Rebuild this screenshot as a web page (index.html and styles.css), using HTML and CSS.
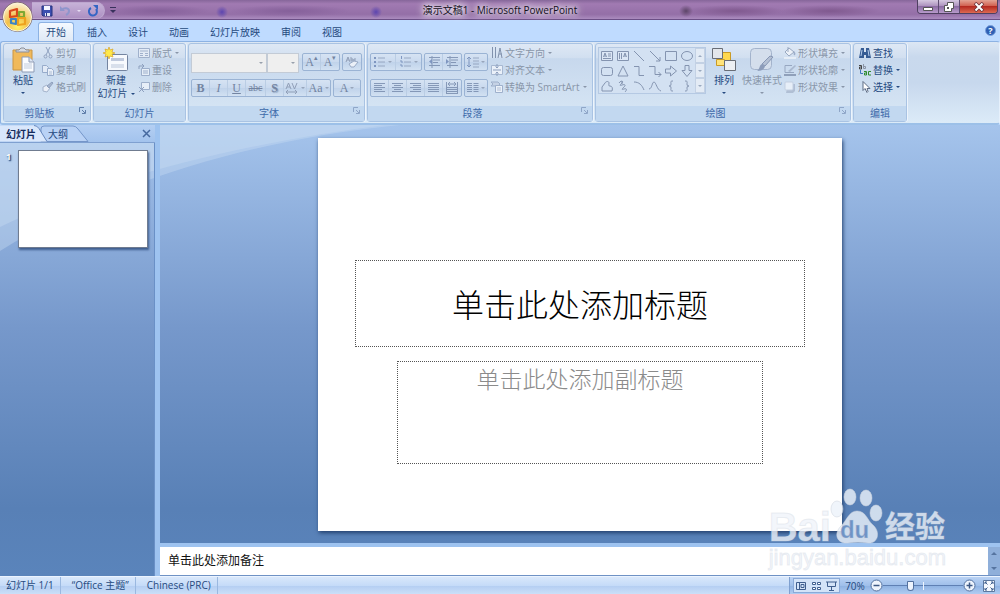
FILE: index.html
```html
<!DOCTYPE html>
<html lang="zh-CN">
<head>
  <meta charset="UTF-8">
  <meta name="viewport" content="width=device-width, initial-scale=1.0">
  <title>演示文稿1 - Microsoft PowerPoint</title>
  <link rel="stylesheet" href="styles.css">
</head>
<body>
  <header class="titlebar">
    <button class="office-button" aria-label="Office">
      <svg width="36" height="36" viewBox="0 0 36 36">
        <defs>
          <radialGradient id="orb" cx="50%" cy="85%" r="85%">
            <stop offset="0" stop-color="#fff36a"/>
            <stop offset="0.45" stop-color="#f3c04c"/>
            <stop offset="1" stop-color="#fdf3d6"/>
          </radialGradient>
        </defs>
        <circle cx="17.500" cy="17" r="15" fill="#7d6a6a"/>
        <circle cx="17.500" cy="17" r="14" fill="url(#orb)" stroke="#fdf6dc"/>
        <g fill="none" stroke-width="2.200" stroke-linejoin="round">
          <path stroke="#d9481c" d="M10 11l7-2v7l-7 1z"/>
          <path stroke="#7fa832" d="M19 12h5v5h-5z"/>
          <path stroke="#3b83c4" d="M11 19l5 0v5l-5-1z"/>
          <path stroke="#eda11d" d="M18 18l7 0v6l-7 1z"/>
        </g>
      </svg>
    </button>
    <div class="quick-access">
      <button aria-label="保存">
        <svg width="12" height="12" viewBox="0 0 12 12"><path d="M1 1h10v10H2l-1-1z" fill="#3c4fb0" stroke="#26327c"/><path d="M3 1h6v4H3z" fill="#f4f6ff"/><path d="M4 8h5v3H4z" fill="#dfe4f6"/><path d="M5 8h1v3H5z" fill="#26327c"/></svg>
      </button>
      <button aria-label="撤消">
        <svg width="12" height="12" viewBox="0 0 12 12"><path d="M1 1v5h5z" fill="#8f95cc"/><path d="M3 5c2-3 7-2 7 1 0 2-1 3-3 4" fill="none" stroke="#8f95cc" stroke-width="2"/></svg>
      </button>
      <span class="caret pale"></span>
      <button aria-label="重复">
        <svg width="12" height="12" viewBox="0 0 12 12"><path d="M4 3a4 4 0 1 0 5 1" fill="none" stroke="#3465c4" stroke-width="2"/><path d="M6 0h5v5z" fill="#3465c4"/></svg>
      </button>
    </div>
    <button class="customize" aria-label="自定义快速访问工具栏">
      <svg width="8" height="8" viewBox="0 0 8 8"><path d="M1 1h6v1H1z" fill="#39315c"/><path d="M1 4h6L4 7z" fill="#39315c"/></svg>
    </button>
    <h1 class="title">演示文稿1 - Microsoft PowerPoint</h1>
    <div class="window-controls">
      <button class="minimize" aria-label="最小化"><svg width="12" height="10" viewBox="0 0 12 10"><path d="M1.500 5.500h9v3h-9z" fill="#fff" stroke="#555"/></svg></button>
      <button class="restore" aria-label="还原"><svg width="12" height="10" viewBox="0 0 12 10"><path d="M4.500.5h6v6h-2v3h-7v-6h3z" fill="#fff" stroke="#555"/><path d="M4 5h2v2H4z" fill="#555"/></svg></button>
      <button class="close" aria-label="关闭"><svg width="12" height="10" viewBox="0 0 12 10"><path d="M2 1l8 8M10 1L2 9" stroke="#6a3038" stroke-width="3.500"/><path d="M2.500 1.500l7 7M9.500 1.500l-7 7" stroke="#fff" stroke-width="2"/></svg></button>
    </div>
  </header>

  <nav class="tabs">
    <button class="tab active">开始</button>
    <button class="tab">插入</button>
    <button class="tab">设计</button>
    <button class="tab">动画</button>
    <button class="tab">幻灯片放映</button>
    <button class="tab">审阅</button>
    <button class="tab">视图</button>
    <button class="help" aria-label="帮助">?</button>
  </nav>

  <div class="ribbon">
    <section class="group clipboard">
      <div class="group-body">
        <button class="large">
          <svg width="24" height="26" viewBox="0 0 24 26"><path d="M2 3h19v20H2z" fill="#f0b95b" stroke="#c99545"/><path d="M5 5h13v-2h-3l-2-2h-3L8 3H5z" fill="#d7dce4" stroke="#8b8f99"/><path d="M11 10h7l5 5v10H11z" fill="#fafcff" stroke="#8d9bb5"/><path d="M18 10v5h5" fill="#dfe6f2" stroke="#8d9bb5"/><path d="M13 17h8M13 19h8M13 21h8" stroke="#c3cddd"/></svg>
          <span>粘贴</span>
          <i class="caret"></i>
        </button>
        <div class="stack">
          <button class="small" disabled><svg width="12" height="12" viewBox="0 0 12 12"><path d="M4 0l4 8M8 0L4 8" stroke="#7e91b3" fill="none"/><circle cx="3.500" cy="9.500" r="1.500" fill="none" stroke="#7e91b3"/><circle cx="8.500" cy="9.500" r="1.500" fill="none" stroke="#7e91b3"/></svg>剪切</button>
          <button class="small" disabled><svg width="12" height="12" viewBox="0 0 12 12"><path d="M.5 1.500h4l2 2v5h-6z" fill="#e8eef8" stroke="#8ba0c2"/><path d="M5.500 4.500h4l2 2v5h-6z" fill="#f1f5fb" stroke="#8ba0c2"/><path d="M7 8h3M7 10h3" stroke="#a5b5d0"/></svg>复制</button>
          <button class="small" disabled><svg width="12" height="12" viewBox="0 0 12 12"><path d="M1 6l4-2 3 3-3 4-4-1z" fill="#f3f5fa" stroke="#9aa9c2"/><path d="M5 5l5-4 1 1-4 5z" fill="#9eadc6" stroke="#8193b3"/></svg>格式刷</button>
        </div>
      </div>
      <div class="group-label with-launcher">剪贴板<button class="launcher" aria-label="剪贴板选项"><svg width="7" height="7" viewBox="0 0 7 7"><path d="M.5 5V.5H5M3 3l3 3M6.500 3v3.500H3" fill="none" stroke="#5f7ea9"/></svg></button></div>
    </section>

    <section class="group slides">
      <div class="group-body">
        <button class="large new-slide">
          <svg width="26" height="26" viewBox="0 0 26 26"><rect x="4.500" y="7.500" width="20" height="16" rx="1" fill="#f7f9fd" stroke="#7484a0"/><path d="M8 11h13v3H8z" fill="#bfc9dd"/><path d="M8 17h13v4H8z" fill="#d8dfeb"/><path d="M6 0l1 3 3-1-1 3 3 1-3 1 1 3-3-1-1 3-1-3-3 1 1-3-3-1 3-1-1-3 3 1z" fill="#ffe94a" stroke="#d9a52a" stroke-width=".7"/></svg>
          <span>新建</span>
          <span>幻灯片<i class="caret"></i></span>
        </button>
        <div class="stack">
          <button class="small" disabled><svg width="12" height="12" viewBox="0 0 12 12"><path d="M.5 1.500h11v9H.5z" fill="#e6edf7" stroke="#93a5c3"/><path d="M2 4h8M2 6.500h3M2 8.500h3M7 6.500h3M7 8.500h3" stroke="#93a5c3"/></svg>版式<i class="caret"></i></button>
          <button class="small" disabled><svg width="12" height="12" viewBox="0 0 12 12"><path d="M3.500 4.500h8v7h-8z" fill="#eef3fa" stroke="#93a5c3"/><path d="M5 7h5M5 9h5" stroke="#93a5c3"/><path d="M1 5V2h5M4 0l2 2-2 2" fill="none" stroke="#7e91b3"/></svg>重设</button>
          <button class="small" disabled><svg width="12" height="12" viewBox="0 0 12 12"><path d="M3.500 1.500h8v7h-8z" fill="#eef3fa" stroke="#93a5c3"/><path d="M1 6l5 5M6 6l-5 5" stroke="#7e91b3"/></svg>删除</button>
        </div>
      </div>
      <div class="group-label">幻灯片</div>
    </section>

    <section class="group font">
      <div class="group-body rows">
        <div class="row">
          <div class="combo family"><select aria-label="字体" disabled><option></option></select></div>
          <div class="combo size"><select aria-label="字号" disabled><option></option></select></div>
          <div class="toolset after-combo">
            <button class="serif" aria-label="增大字号" disabled>A<sup>▴</sup></button>
            <button class="serif" aria-label="减小字号" disabled>A<sup>▾</sup></button>
          </div>
          <div class="toolset">
            <button aria-label="清除所有格式" disabled><svg width="14" height="12" viewBox="0 0 14 12"><path d="M1 6l2-5 2 5M2 4h2M6 1v4h2V3H6M11 3h-2v2h2" fill="none" stroke="#8391ab"/><path d="M4 8l5-3 4 1-4 5H6z" fill="#f5f7fb" stroke="#8fa0bd"/></svg></button>
          </div>
        </div>
        <div class="row">
          <div class="toolset">
            <button class="serif" disabled><b>B</b></button>
            <button class="serif" disabled><em>I</em></button>
            <button class="serif" disabled><u>U</u></button>
            <button class="serif strike" disabled><s>abc</s></button>
            <button class="serif shadow" disabled><b>S</b></button>
            <button class="wide" aria-label="字符间距" disabled><svg width="14" height="13" viewBox="0 0 14 13"><path d="M1 7l2.500-6L6 7M2 5h3M7 1l2.500 6L12 1M1 10h11M3 8l-2 2 2 2M10 8l2 2-2 2" fill="none" stroke="#8391ab"/></svg><i class="caret"></i></button>
            <button class="serif wide" disabled>Aa<i class="caret"></i></button>
          </div>
          <div class="toolset">
            <button class="serif color" aria-label="字体颜色" disabled>A<i class="caret"></i></button>
          </div>
        </div>
      </div>
      <div class="group-label with-launcher">字体<button class="launcher" aria-label="字体选项"><svg width="7" height="7" viewBox="0 0 7 7"><path d="M.5 5V.5H5M3 3l3 3M6.500 3v3.500H3" fill="none" stroke="#8fa6c8"/></svg></button></div>
    </section>

    <section class="group paragraph">
      <div class="group-body">
        <div class="rows">
          <div class="row">
            <div class="toolset">
              <button class="list" aria-label="项目符号" disabled><svg width="12" height="12" viewBox="0 0 12 12"><path d="M0 2h2M0 6h2M0 10h2" stroke="#6d86b5" stroke-width="2"/><path d="M4 2h7M4 6h7M4 10h7" stroke="#8c9cb8"/></svg><i class="caret"></i></button>
              <button class="list" aria-label="编号" disabled><svg width="12" height="12" viewBox="0 0 12 12"><path d="M1.500 0v3M0 5h2v2M0 9h2v2" fill="none" stroke="#6d86b5"/><path d="M4 2h7M4 6h7M4 10h7" stroke="#8c9cb8"/></svg><i class="caret"></i></button>
            </div>
            <div class="toolset">
              <button class="icon" aria-label="减少缩进" disabled><svg width="12" height="12" viewBox="0 0 12 12"><path d="M1 1.500h11M5 4h7M5 6.500h5M1 9.500h11M4 0v12" stroke="#7488aa"/><path d="M4 3v5L1 5.500z" fill="#6d86b5"/></svg></button>
              <button class="icon" aria-label="增加缩进" disabled><svg width="12" height="12" viewBox="0 0 12 12"><path d="M1 1.500h11M5 4h7M5 6.500h5M1 9.500h11M4 0v12" stroke="#7488aa"/><path d="M0 3v5l3-2.500z" fill="#6d86b5"/></svg></button>
            </div>
            <div class="toolset">
              <button class="columns" aria-label="行距" disabled><svg width="12" height="12" viewBox="0 0 12 12"><path d="M2 1v10M0 3l2-2 2 2M0 9l2 2 2-2" fill="none" stroke="#6d86b5"/><path d="M6 2h6M6 5h6M6 8h6M6 11h6" stroke="#8c9cb8"/></svg><i class="caret"></i></button>
            </div>
          </div>
          <div class="row">
            <div class="toolset">
              <button class="icon" aria-label="左对齐" disabled><svg width="12" height="12" viewBox="0 0 12 12"><path d="M0 1.500h11M0 3.500h8M0 5.500h11M0 7.500h8M0 9.500h11" stroke="#7488aa"/></svg></button>
              <button class="icon" aria-label="居中" disabled><svg width="12" height="12" viewBox="0 0 12 12"><path d="M0 1.500h11M2 3.500h7M0 5.500h11M2 7.500h7M0 9.500h11" stroke="#7488aa"/></svg></button>
              <button class="icon" aria-label="右对齐" disabled><svg width="12" height="12" viewBox="0 0 12 12"><path d="M0 1.500h11M3 3.500h8M0 5.500h11M3 7.500h8M0 9.500h11" stroke="#7488aa"/></svg></button>
              <button class="icon" aria-label="两端对齐" disabled><svg width="12" height="12" viewBox="0 0 12 12"><path d="M0 1.500h11M0 3.500h11M0 5.500h11M0 7.500h11M0 9.500h11" stroke="#7488aa"/></svg></button>
              <button class="icon" aria-label="分散对齐" disabled><svg width="12" height="12" viewBox="0 0 12 12"><path d="M.5 0v12M11.500 0v12M2 2h8M4 0L2 2l2 2M8 0l2 2-2 2" fill="none" stroke="#7488aa"/><path d="M1 5.500h10M1 7.500h10M1 9.500h10M1 11.500h10" stroke="#7488aa"/></svg></button>
            </div>
            <div class="toolset">
              <button class="columns" aria-label="分栏" disabled><svg width="12" height="12" viewBox="0 0 12 12"><path d="M0 1.500h5M0 3.500h5M0 5.500h5M0 7.500h5M0 9.500h5M6.500 1.500h5M6.500 3.500h5M6.500 5.500h5M6.500 7.500h5M6.500 9.500h5" stroke="#7488aa"/></svg><i class="caret"></i></button>
            </div>
          </div>
        </div>
        <div class="stack">
          <button class="small" disabled><svg width="12" height="12" viewBox="0 0 12 12"><path d="M1.500 0v11M4.500 0v11M7 11l2-10 2 10M8 7h3" fill="none" stroke="#6c7e9c"/></svg>文字方向<i class="caret"></i></button>
          <button class="small" disabled><svg width="12" height="12" viewBox="0 0 12 12"><path d="M.5 1.500h11v9H.5z" fill="#f2f6fc" stroke="#9fb0cb"/><path d="M2 6h8M6 0v4M6 8v4M4.500 2.500L6 4l1.500-1.500M4.500 9.500L6 8l1.500 1.500" fill="none" stroke="#7e91b3"/></svg>对齐文本<i class="caret"></i></button>
          <button class="small" disabled><svg width="12" height="12" viewBox="0 0 12 12"><path d="M0 1h7l2 2-2 2H0l2-2z" fill="#c4d0e3" stroke="#93a5c3"/><path d="M4.500 4.500h7v7h-7z" fill="#f4f7fc" stroke="#93a5c3"/><path d="M6 7h4M6 9h4" stroke="#a9b7cf"/></svg>转换为 SmartArt<i class="caret"></i></button>
        </div>
      </div>
      <div class="group-label with-launcher">段落<button class="launcher" aria-label="段落选项"><svg width="7" height="7" viewBox="0 0 7 7"><path d="M.5 5V.5H5M3 3l3 3M6.500 3v3.500H3" fill="none" stroke="#8fa6c8"/></svg></button></div>
    </section>

    <section class="group drawing">
      <div class="group-body">
        <div class="gallery">
          <div class="shapes">
            <svg viewBox="0 0 14 14"><path d="M1.500 2.500h11v9h-11z" fill="#dbe6f5"/><path d="M3.500 8l1.500-4 1.500 4M4 7h2M8 5h3M8 7h3M3 9.500h8"/></svg>
            <svg viewBox="0 0 14 14"><path d="M1.500 2.500h11v9h-11z" fill="#dbe6f5"/><path d="M7.500 8L9 4l1.500 4M8 7h2M3.500 4v6M5.500 4v6"/></svg>
            <svg viewBox="0 0 14 14"><path d="M2 2l10 10"/></svg>
            <svg viewBox="0 0 14 14"><path d="M2 2l10 10M12 8v4H8"/></svg>
            <svg viewBox="0 0 14 14"><path d="M1.500 2.500h11v9h-11z"/></svg>
            <svg viewBox="0 0 14 14"><ellipse cx="7" cy="7" rx="5.500" ry="4.500"/></svg>
            <svg viewBox="0 0 14 14"><rect x="1.500" y="3.500" width="11" height="8" rx="2"/></svg>
            <svg viewBox="0 0 14 14"><path d="M7 2l5 10H2z"/></svg>
            <svg viewBox="0 0 14 14"><path d="M2 2.500h5v9h5"/></svg>
            <svg viewBox="0 0 14 14"><path d="M1 2.500h6v8h6M10.500 8l2.500 2.500-2.500 2.500"/></svg>
            <svg viewBox="0 0 14 14"><path d="M1.500 5h5V2l6 5-6 5V9h-5z"/></svg>
            <svg viewBox="0 0 14 14"><path d="M5 1.500h4v5h3l-5 6-5-6h3z"/></svg>
            <svg viewBox="0 0 14 14"><path d="M2 12V8l3-4c1-2 4-2 4 0s-1 3 1 3 3 2 2 5z"/></svg>
            <svg viewBox="0 0 14 14"><path d="M3 4c2-3 5-2 3 0s-3 3 0 2 4 0 2 2-3 3 0 2 3 1 1 3M6 2v3"/></svg>
            <svg viewBox="0 0 14 14"><path d="M2 3c5 0 8 3 10 8"/></svg>
            <svg viewBox="0 0 14 14"><path d="M1 10c3 0 3-7 5-7s3 8 7 9"/></svg>
            <svg viewBox="0 0 14 14"><path d="M9 2c-3 0-2 1-2 3s-1 2-2 2c1 0 2 0 2 2s-1 3 2 3"/></svg>
            <svg viewBox="0 0 14 14"><path d="M5 2c3 0 2 1 2 3s1 2 2 2c-1 0-2 0-2 2s1 3-2 3"/></svg>
          </div>
          <div class="gallery-scroll">
            <button aria-label="上一行"><i class="caret up"></i></button>
            <button aria-label="下一行"><i class="caret"></i></button>
            <button aria-label="其他"><i class="caret lined"></i></button>
          </div>
        </div>
        <button class="large arrange">
          <svg width="24" height="26" viewBox="0 0 24 26"><path d="M7.500 5.500h11v11h-11z" fill="#ffd84f" stroke="#c99a25"/><path d="M4.500 12.500h8v6h-8z" fill="#ffe37a" stroke="#c99a25"/><path d="M.5 1.500h10v10H.5z" fill="#e3e6eb" stroke="#686d76"/><path d="M12.500 13.500h11v10h-11z" fill="#eceff3" stroke="#686d76"/></svg>
          <span>排列</span>
          <i class="caret"></i>
        </button>
        <button class="large quick-styles" disabled>
          <svg width="26" height="26" viewBox="0 0 26 26"><rect x="1.500" y="1.500" width="21" height="21" rx="4" fill="#d4deec" stroke="#a3b3cc"/><path d="M24 10l-8 9-3-2 8-8z" fill="#b4c0d4" stroke="#8797b5"/><path d="M13 17l3 2c-1 4-4 5-8 5 3-2 2-6 5-7z" fill="#8c9cba"/></svg>
          <span>快速样式</span>
          <i class="caret"></i>
        </button>
        <div class="stack">
          <button class="small" disabled><svg width="12" height="12" viewBox="0 0 12 12"><path d="M1 5l4-4 5 4-5 4z" fill="#f2f5fa" stroke="#8b9bb6"/><path d="M4 5V0" stroke="#8b9bb6"/><path d="M10 4c1 1 2 3 1 4s-2 0-1-4z" fill="#8fa1c0"/><path d="M0 10h12v2H0z" fill="#edf2f9"/></svg>形状填充<i class="caret"></i></button>
          <button class="small" disabled><svg width="12" height="12" viewBox="0 0 12 12"><path d="M8 1.500H1v7h9" fill="none" stroke="#8b9bb6"/><path d="M4 7l7-6 1 1-6 6z" fill="#a2b0c8"/><path d="M0 10h12v2H0z" fill="#8292ae"/></svg>形状轮廓<i class="caret"></i></button>
          <button class="small" disabled><svg width="12" height="12" viewBox="0 0 12 12"><path d="M4 3h7v7L9 12H2z" fill="#a9b7ce"/><rect x="1" y="1" width="8" height="8" rx="1" fill="#eef3fa" stroke="#c0ccde"/></svg>形状效果<i class="caret"></i></button>
        </div>
      </div>
      <div class="group-label with-launcher">绘图<button class="launcher" aria-label="绘图选项"><svg width="7" height="7" viewBox="0 0 7 7"><path d="M.5 5V.5H5M3 3l3 3M6.500 3v3.500H3" fill="none" stroke="#8fa6c8"/></svg></button></div>
    </section>

    <section class="group editing">
      <div class="group-body">
        <div class="stack">
          <button class="small"><svg width="12" height="12" viewBox="0 0 12 12"><path d="M2 1h3v4h2V1h3l2 10H7V8H5v3H0z" fill="#365c94"/><path d="M3 3l-1 6M9 3l1 6" stroke="#b9d0ee"/></svg>查找</button>
          <button class="small"><svg width="12" height="12" viewBox="0 0 12 12"><g fill="none"><path d="M0 1.500h2.500V5H.5V3h2" stroke="#444"/><path d="M4.500 0v4.500h2V2.500h-2" stroke="#8a94a6"/><path d="M1.500 6v3.500H4" stroke="#3f74bf"/><path d="M5 7.500h2.500V11h-2V9h2M12 7.500H9.500V11H12" stroke="#2e8b2e"/></g></svg>替换<i class="caret"></i></button>
          <button class="small"><svg width="12" height="12" viewBox="0 0 12 12"><path d="M4 .5v9l2-2 2 4 1-1-1-3h3z" fill="#fff" stroke="#5b6a83"/></svg>选择<i class="caret"></i></button>
        </div>
      </div>
      <div class="group-label">编辑</div>
    </section>
  </div>

  <main class="workspace">
    <svg class="swoosh" width="420" height="130" viewBox="0 0 420 130"><path d="M0 0h400C260 14 120 52 0 126z"/><path d="M0 0h385C240 18 100 54 0 102z"/></svg>
    <aside class="slide-pane">
      <div class="pane-tabs">
        <svg class="pane-shape" width="92" height="17" viewBox="0 0 92 17"><path d="M41 16.500V4q0-3 3-3h29q3 0 5 3l10 12.500z" fill="#b9d2f5" stroke="#7596c9"/><path d="M0 .5h34q3 0 5 3l8 13H0z" fill="#d9e7fb"/><path d="M34 .5q3 0 5 3l8 13" fill="none" stroke="#6788bd"/></svg>
        <button class="pane-tab active">幻灯片</button>
        <button class="pane-tab">大纲</button>
        <button class="pane-close" aria-label="关闭"><svg width="9" height="9" viewBox="0 0 9 9"><path d="M1 1l7 7M8 1L1 8" stroke="#46699f" stroke-width="1.500"/></svg></button>
      </div>
      <div class="thumbs">
        <span class="thumb-number">1</span>
        <button class="thumb" aria-label="幻灯片 1"></button>
      </div>
    </aside>
    <div class="editor">
      <div class="stage">
        <div class="slide">
          <h2 class="placeholder title-box">单击此处添加标题</h2>
          <p class="placeholder subtitle-box">单击此处添加副标题</p>
        </div>
      </div>
      <div class="notes">
        <textarea aria-label="备注">单击此处添加备注</textarea>
        <div class="notes-scroll"><i class="caret up"></i><i class="caret"></i></div>
      </div>
    </div>
    <div class="watermark">
      <div class="brand">
        <span>Bai</span>
        <span class="paw">
          <svg width="48" height="56" viewBox="0 0 48 56"><ellipse cx="6" cy="21" rx="6" ry="8"/><ellipse cx="19" cy="9" rx="6" ry="8"/><ellipse cx="35" cy="10" rx="6" ry="8"/><ellipse cx="45" cy="25" rx="6" ry="8"/><path d="M26 23c9 0 10 9 16 14 8 7 5 19-5 18-7-1-13-1-20 0-11 1-15-9-7-17 6-6 8-15 16-15z"/></svg>
          <b>du</b>
        </span>
        <span class="cn">经验</span>
      </div>
      <div class="site">jingyan.baidu.com</div>
    </div>
  </main>

  <footer class="statusbar">
    <span class="status-item">幻灯片 1/1</span>
    <span class="status-item">“Office 主题”</span>
    <span class="status-item">Chinese (PRC)</span>
    <div class="view-tools">
      <div class="views">
        <button aria-label="普通视图"><svg width="11" height="10" viewBox="0 0 11 10"><path d="M.5 1.500h9v7h-9zM3.500 1.500v7M5 3.500h3v3H5z" fill="none" stroke="#3f5e8e"/></svg></button>
        <button aria-label="幻灯片浏览"><svg width="11" height="10" viewBox="0 0 11 10"><path d="M1.500 1.500h3v2h-3zM6.500 1.500h3v2h-3zM1.500 6.500h3v2h-3zM6.500 6.500h3v2h-3z" fill="#fff" stroke="#3f5e8e"/></svg></button>
        <button aria-label="幻灯片放映"><svg width="11" height="10" viewBox="0 0 11 10"><path d="M0 1h11M1.500 1v4.500h8V1M5.500 6v3M3 9.500h5" fill="none" stroke="#3f5e8e"/></svg></button>
      </div>
      <button class="zoom-level">70%</button>
      <button aria-label="缩小"><svg width="13" height="13" viewBox="0 0 13 13"><circle cx="6.500" cy="6.500" r="5.500" fill="#eef4fd" stroke="#53719f"/><path d="M3.500 6.500h6" stroke="#3c5884" stroke-width="1.500"/></svg></button>
      <input class="zoom" type="range" min="0" max="100" value="33" aria-label="显示比例">
      <button aria-label="放大"><svg width="13" height="13" viewBox="0 0 13 13"><circle cx="6.500" cy="6.500" r="5.500" fill="#eef4fd" stroke="#53719f"/><path d="M3.500 6.500h6M6.500 3.500v6" stroke="#3c5884" stroke-width="1.500"/></svg></button>
      <button class="fit" aria-label="适应窗口"><svg width="12" height="12" viewBox="0 0 12 12"><path d="M.5.5h11v11H.5z" fill="#f6f9fe" stroke="#5d789f"/><path d="M2 4V2h2M2 2l2.500 2.500M8 2h2v2M10 2L7.500 4.500M2 8v2h2M2 10l2.500-2.500M8 10h2V8M10 10L7.500 7.500" fill="none" stroke="#3f5e8e"/></svg></button>
    </div>
  </footer>
</body>
</html>
```

FILE: styles.css
```css
* {
  box-sizing: border-box;
}

body {
  display: flex;
  flex-direction: column;
  height: 100vh;
  margin: 0;
  overflow: hidden;
  font-family: "Open Sans", "Noto Sans CJK SC", sans-serif;
  font-size: 10px;
  line-height: 14px;
  color: #264a80;
  background: #bfdbff;
}

button {
  display: flex;
  align-items: center;
  justify-content: center;
  padding: 0;
  border: 0;
  background: none;
  font: inherit;
  color: inherit;
}

svg {
  flex: none;
}

.caret {
  flex: none;
  width: 4px;
  border: 2px solid transparent;
  border-top-color: currentColor;
  border-bottom: 0;
}

.caret.up {
  border-top: 0;
  border-bottom: 2px solid currentColor;
}

.caret.pale {
  color: #e6dcf2;
}

/* title bar */
.titlebar {
  position: relative;
  display: flex;
  align-items: flex-start;
  height: 20px;
  padding-left: 32px;
  border-bottom: 1px solid #6b4f86;
  background:
    radial-gradient(ellipse 6px 6px at 222px 12px, #5c45b0, transparent),
    radial-gradient(ellipse 6px 6px at 376px 12px, #5c45b0, transparent),
    radial-gradient(ellipse 7px 6px at 686px 11px, #5d4568, transparent),
    radial-gradient(ellipse 60px 6px at 290px 11px, #85609a, transparent),
    radial-gradient(ellipse 50px 6px at 160px 11px, #85609a, transparent),
    radial-gradient(ellipse 50px 6px at 735px 11px, #80598f, transparent),
    radial-gradient(ellipse 50px 6px at 830px 11px, #80598f, transparent),
    linear-gradient(#86669a, #a17ab2 20%, #946fa7 75%, #ab8cbf);
}

.office-button {
  position: absolute;
  left: 0;
  top: 0;
  z-index: 2;
}

.quick-access {
  display: flex;
  align-items: center;
  gap: 6px;
  height: 17px;
  margin-top: 2px;
  padding: 0 5px 0 9px;
  border: 1px solid #bda6cf;
  border-left: 0;
  border-radius: 0 9px 9px 0;
  background: linear-gradient(#c7b2d8, #ad90c2);
}

.customize {
  margin: 6px 0 0 4px;
}

.title {
  position: absolute;
  left: 0;
  right: 0;
  top: 3px;
  margin: 0;
  font-size: 10px;
  font-weight: 400;
  text-align: center;
  color: #14101c;
  text-shadow: 0 0 5px #fff, 0 0 8px #fff, 0 0 10px #fff;
}

.window-controls {
  position: relative;
  display: flex;
  margin: 0 2px 0 auto;
  border: 1px solid #4e4060;
  border-top: 0;
  border-radius: 0 0 4px 4px;
  overflow: hidden;
}

.window-controls button {
  width: 21px;
  height: 13px;
  border-right: 1px solid #5c4b70;
  background: linear-gradient(#d5c8e0, #a98dbb 50%, #8c6ca4 50%, #b79bcb);
}

.window-controls .close {
  width: 37px;
  border-right: 0;
  background: linear-gradient(#e3a394, #cf5a4a 50%, #b52a20 50%, #dd6a52);
}

/* ribbon tabs */
.tabs {
  display: flex;
  height: 21px;
  padding: 0 4px 0 36px;
  background: #bfdbff;
}

.tab {
  margin: 2px 3px 0 2px;
  padding: 0 7px;
  border: 1px solid transparent;
  border-bottom: 0;
  border-radius: 3px 3px 0 0;
}

.tab.active {
  border-color: #8db2e3;
  background: linear-gradient(#f4f9ff, #dfe9f5);
}

.help {
  align-self: center;
  width: 11px;
  height: 11px;
  margin-left: auto;
  border: 1px solid #7ba0dc;
  border-radius: 50%;
  font-size: 9px;
  font-weight: 700;
  line-height: 9px;
  color: #fff;
  background: #2f60b4;
}

/* ribbon */
.ribbon {
  display: flex;
  gap: 2px;
  padding: 1px 2px;
  border: 1px solid #8db2e3;
  border-right-color: #e6f0fb;
  border-bottom: 2px solid #9cc0e8;
  border-radius: 3px;
  background: linear-gradient(#dce7f4, #c9d9ed 18%, #c7d8ed 50%, #dcebf8);
}

.group {
  display: flex;
  flex-direction: column;
  height: 79px;
  border: 1px solid #a9c3e3;
  border-radius: 3px;
  background: linear-gradient(#dee8f5, #d1dff0 18%, #c7d8ed 19%, #d8e7f5);
  box-shadow: 1px 0 0 #edf4fc;
}

.group-body {
  flex: 1;
  display: flex;
  align-items: flex-start;
}

.group-label {
  position: relative;
  height: 15px;
  text-align: center;
  color: #3e6aaa;
  background: #c2d8f0;
}

.with-launcher {
  padding-right: 15px;
}

.launcher {
  position: absolute;
  right: 4px;
  top: 1px;
}

.clipboard {
  width: 88px;
}

.slides {
  width: 93px;
}

.font {
  width: 177px;
}

.paragraph {
  width: 226px;
}

.drawing {
  width: 256px;
}

.editing {
  width: 54px;
}

.stack {
  display: flex;
  flex-direction: column;
}

.small {
  justify-content: flex-start;
  gap: 2px;
  height: 17px;
  white-space: nowrap;
}

.small .caret {
  margin-left: 1px;
}

.small:disabled,
.large:disabled {
  color: #8996a9;
}

.small:disabled svg,
.toolset svg {
  opacity: .8;
}

.large {
  flex-direction: column;
  justify-content: flex-start;
  width: 38px;
  padding-top: 3px;
  line-height: 13px;
}

.large .caret {
  margin-top: 5px;
}

.large span .caret {
  display: inline-block;
  margin: 0 0 2px 3px;
}

.large span {
  padding-top: 1px;
}

.new-slide {
  width: 44px;
  line-height: 12px;
  white-space: nowrap;
}

/* font and paragraph tools */
.rows {
  display: flex;
  flex-direction: column;
  gap: 8px;
  padding: 9px 2px 0;
}

.group-body.rows {
  align-items: stretch;
}

.row {
  display: flex;
  align-items: flex-start;
  gap: 2px;
  height: 18px;
}

.combo {
  position: relative;
  margin-right: -2px;
}

.combo select {
  width: 100%;
  height: 20px;
  border: 1px solid #c3cbd6;
  border-radius: 0;
  background: #efefef;
  opacity: 1;
  appearance: none;
}

.combo::after {
  content: "";
  position: absolute;
  right: 4px;
  top: 9px;
  border: 2px solid transparent;
  border-top-color: #98a0ac;
  border-bottom: 0;
}

.family {
  width: 80px;
}

.size {
  width: 33px;
}

.after-combo {
  margin-left: 3px;
}

.toolset {
  display: flex;
  height: 18px;
  border: 1px solid #9ab3d4;
  border-radius: 2px;
  background: linear-gradient(#d6e3f3, #c9d9ee 50%, #bfd2ea 50%, #d2e1f2);
}

.toolset button {
  width: 18px;
  border-right: 1px solid #bacde4;
  color: #7384a1;
}

.toolset button:last-child {
  border-right: 0;
}

.toolset .caret {
  margin-left: 2px;
  color: #98a6bc;
}

.toolset .serif {
  font-family: "Liberation Serif", serif;
  font-size: 12px;
}

.toolset .serif sup {
  align-self: flex-start;
  font-size: 7px;
  line-height: 8px;
}

.toolset .strike {
  width: 20px;
  font-size: 10px;
}

.toolset .shadow {
  text-shadow: 1px 1px 1px #8ea0bd;
}

.toolset .wide {
  width: 23px;
}

.toolset .color {
  width: 26px;
}

.toolset .list {
  width: 25px;
}

.toolset .columns {
  width: 22px;
}

.paragraph .stack {
  padding-left: 1px;
}

/* drawing */
.gallery {
  display: flex;
  margin: 3px 0 0 2px;
  border: 1px solid #b5c9e3;
}

.shapes {
  display: grid;
  grid-template-columns: repeat(6, 16px);
  grid-auto-rows: 15px;
  place-items: center;
  background: #d3e1f2;
}

.shapes svg {
  width: 14px;
  height: 14px;
  fill: none;
  stroke: #8494b0;
}

.gallery-scroll {
  display: flex;
  flex-direction: column;
}

.gallery-scroll button {
  flex: 1;
  width: 10px;
  border: 1px solid #c3d1e4;
  color: #9aa9bf;
  background: #e3ebf5;
}

.gallery-scroll .lined {
  box-shadow: 0 -2px 0 -1px #9aa9bf;
}

.arrange {
  width: 36px;
}

.quick-styles {
  width: 40px;
  white-space: nowrap;
}

.drawing .stack {
  padding-left: 2px;
}

.editing .stack {
  padding-left: 5px;
}

/* workspace */
.workspace {
  position: relative;
  flex: 1;
  display: flex;
  min-height: 0;
  background: linear-gradient(#a5c4ec, #7698cb 45%, #5880b6 85%, #5a84bb);
}

.swoosh {
  position: absolute;
  left: 0;
  top: 0;
  fill: #c8dbf3;
  fill-opacity: .4;
}

.slide-pane {
  position: relative;
  width: 160px;
  border-right: 5px solid #9ec3f0;
  box-shadow: inset -1px 0 0 #6a90c6;
}

.pane-tabs {
  position: relative;
  display: flex;
  align-items: center;
  height: 18px;
  padding: 0 4px 0 6px;
  border-bottom: 1px solid #7fa0d0;
  background: linear-gradient(#b4cff3, #a3c3ed);
}

.pane-shape {
  position: absolute;
  left: 0;
  top: 0;
}

.pane-tab {
  position: relative;
  margin-right: 12px;
}

.pane-tab.active {
  color: #142a5c;
  font-weight: 700;
}

.pane-close {
  margin-left: auto;
}

.thumbs {
  display: flex;
  gap: 6px;
  padding: 7px 7px 0 6px;
}

.thumb-number {
  width: 6px;
  font-size: 9px;
  font-weight: 700;
  color: #fff;
  text-shadow: 1px 1px 1px #2c4a78, 1px 1px 2px #2c4a78;
}

.thumb {
  flex: 1;
  aspect-ratio: 4 / 3;
  border: 1px solid #707c90;
  background: #fff;
  box-shadow: 1px 2px 2px #3f5e8e;
}

.editor {
  position: relative;
  flex: 1;
  display: flex;
  flex-direction: column;
  min-width: 0;
}

.stage {
  flex: 1;
  display: flex;
  justify-content: center;
  min-height: 0;
  padding: 13px 0 12px;
}

.slide {
  display: flex;
  flex-direction: column;
  align-items: center;
  height: 100%;
  aspect-ratio: 4 / 3;
  padding-top: 122px;
  background: #fff;
  box-shadow: 1px 2px 4px #22406e;
}

.placeholder {
  display: flex;
  justify-content: center;
  margin: 0;
  border: 1px dotted #555;
  font-family: "Noto Sans CJK SC", sans-serif;
  font-weight: 300;
}

.title-box {
  align-items: center;
  width: 86%;
  height: 32%;
  font-size: 32px;
  color: #000;
}

.subtitle-box {
  width: 70%;
  height: 38%;
  margin-top: 14px;
  font-size: 23px;
  line-height: 32px;
  color: #8b8b8b;
}

.notes {
  display: flex;
  height: 33px;
  border-top: 4px solid #9ec3f0;
  border-bottom: 1px solid #6f92c5;
  background: #fff;
}

.notes textarea {
  flex: 1;
  padding: 4px 8px;
  border: 0;
  outline: 0;
  resize: none;
  overflow: hidden;
  font-family: "Noto Sans CJK SC", sans-serif;
  font-size: 12px;
  line-height: 18px;
  color: #111;
}

.notes-scroll {
  display: flex;
  flex-direction: column;
  align-items: center;
  justify-content: space-between;
  width: 12px;
  padding: 5px 0;
  color: #56749f;
  background: #8fafda;
}

.notes-scroll .caret {
  width: 6px;
  border-width: 3px;
  border-bottom-width: 0;
}

.notes-scroll .up {
  border-top-width: 0;
  border-bottom-width: 3px;
}

/* watermark */
.watermark {
  position: absolute;
  right: 54px;
  bottom: 4px;
  color: rgba(240, 244, 250, .8);
  -webkit-text-stroke: 1px rgba(205, 212, 222, .35);
  pointer-events: none;
}

.brand {
  display: flex;
  align-items: flex-end;
  height: 56px;
  font-family: "Liberation Sans", "Noto Sans CJK SC", sans-serif;
  font-size: 40px;
  font-weight: 700;
  line-height: 34px;
}

.paw {
  position: relative;
  height: 56px;
  margin-right: 6px;
}

.paw svg {
  overflow: visible;
  fill: rgba(236, 242, 250, .8);
  stroke: rgba(205, 212, 222, .5);
}

.paw b {
  position: absolute;
  left: 9px;
  bottom: 0;
  font-size: 24px;
  line-height: 28px;
  color: #6f93c6;
}

.cn {
  font-size: 30px;
}

.site {
  font-family: "Liberation Sans", sans-serif;
  font-size: 22px;
  line-height: 28px;
}

/* status bar */
.statusbar {
  display: flex;
  height: 18px;
  border-top: 1px solid #eaf3ff;
  background: linear-gradient(#d9e8fb, #c5dbf8 50%, #b3cdf2 50%, #cbdff8);
}

.status-item {
  padding: 1px 6px;
  border-right: 1px solid #9ab8e0;
}

.status-item + .status-item {
  padding: 1px 6px 1px 11px;
}

.view-tools {
  display: flex;
  align-items: center;
  margin-left: auto;
  padding: 0 5px 0 3px;
  border-left: 1px solid #7fa0d0;
  background: linear-gradient(#b9d2f4, #9fbfea 50%, #8db1e2 50%, #b0ccf1);
}

.views {
  display: flex;
  border: 1px solid #8aaad8;
  background: #d3e3f8;
}

.views button {
  width: 15px;
  height: 13px;
}

.zoom-level {
  width: 30px;
}

.zoom {
  width: 80px;
  height: 12px;
  margin: 0;
  appearance: none;
  background:
    linear-gradient(#eef5fe, #eef5fe) 50% 50% / 1px 8px no-repeat,
    linear-gradient(#5f80b4, #5f80b4) 0 50% / 100% 1px no-repeat;
}

.zoom::-webkit-slider-thumb {
  appearance: none;
  width: 7px;
  height: 10px;
  border: 1px solid #53719f;
  border-radius: 1px 1px 4px 4px;
  background: #eef4fd;
}

.fit {
  margin-left: 7px;
}
```
